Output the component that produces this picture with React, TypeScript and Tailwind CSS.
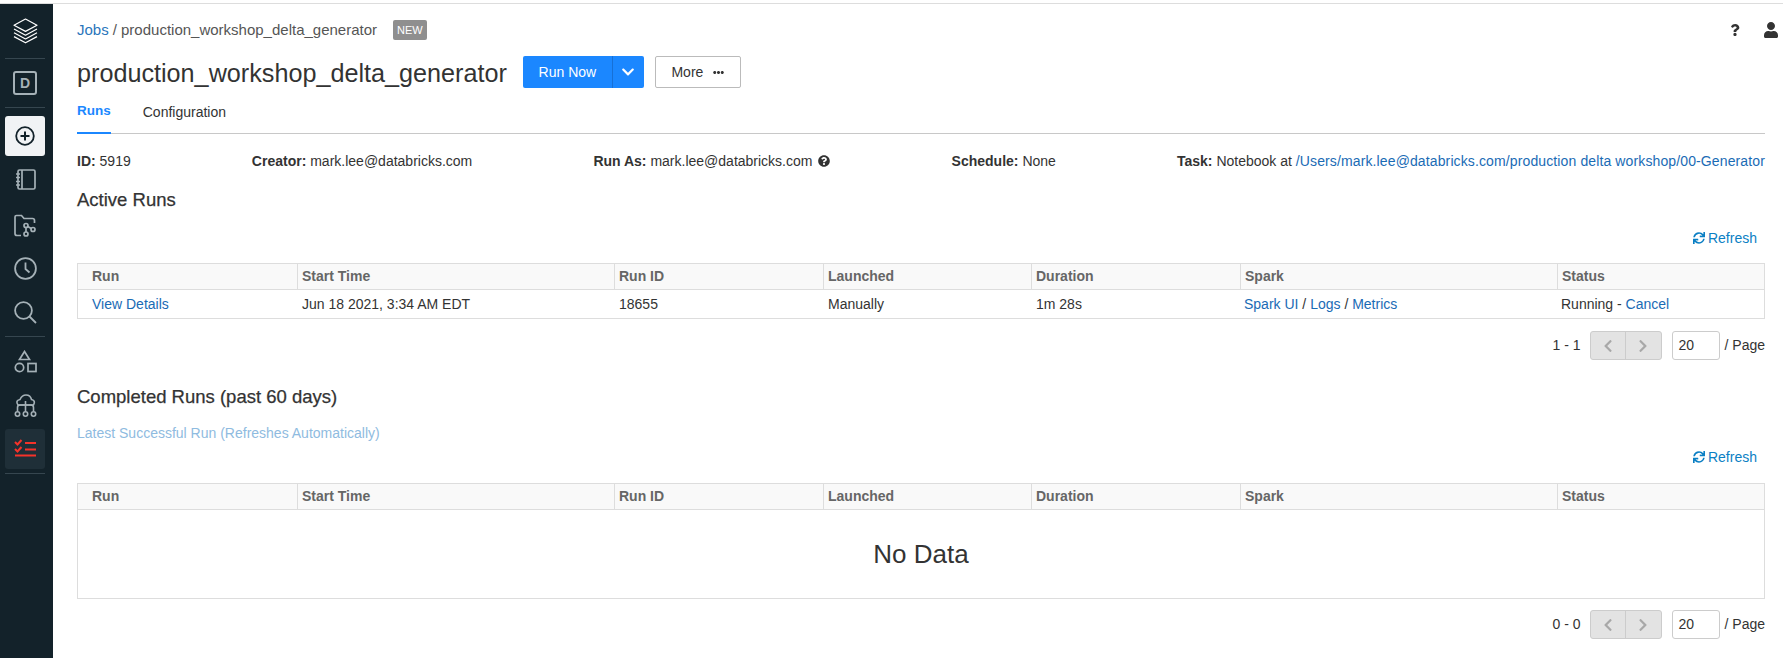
import { FaChevronDown, FaChevronLeft, FaChevronRight, FaEllipsisH, FaQuestion, FaQuestionCircle, FaSync, FaUser } from "react-icons/fa";

const columns = ["Run", "Start Time", "Run ID", "Launched", "Duration", "Spark", "Status"];
const gridCols = "grid grid-cols-[219px_317px_209px_208px_209px_317px_1fr]";
const link = "text-[#1a6bb5]";

const Divider = () => <div className="mx-[5px] h-px bg-[#36464f]" />;

const Sidebar = () => (
  <aside className="w-[53px] shrink-0 bg-[#13222a] pr-[3px] text-[#a5b1b7]">
    <div className="flex h-[54px] items-center justify-center">
      <svg width="25" height="26" viewBox="0 0 25 26" fill="none" stroke="#ffffff" strokeWidth="1.2" strokeLinejoin="round">
        <path d="M12.5 1 L24 7.2 L12.5 13.4 L1 7.2 Z" />
        <path d="M1 11 L12.5 17.2 L24 11" />
        <path d="M1 14.8 L12.5 21 L24 14.8" />
        <path d="M1 18.6 L12.5 24.8 L24 18.6" />
      </svg>
    </div>
    <Divider />
    <div className="flex h-[48px] items-center justify-center">
      <div className="flex h-[24px] w-[24px] items-center justify-center rounded-[3px] border-2 border-[#a5b1b7] font-['Liberation_Sans',sans-serif] text-[14px] font-bold">
        D
      </div>
    </div>
    <Divider />
    <div className="mx-[5px] mt-[8px] flex h-[40px] items-center justify-center rounded-[3px] bg-[#f1f3f5]">
      <svg width="20" height="20" viewBox="0 0 20 20" fill="none" stroke="#13222a" strokeWidth="1.8">
        <circle cx="10" cy="10" r="8.8" />
        <path d="M10 5.5 V14.5 M5.5 10 H14.5" strokeWidth="2" />
      </svg>
    </div>
    <div className="flex h-[47px] items-center justify-center">
      <svg width="21" height="21" viewBox="0 0 21 21" fill="none" stroke="currentColor" strokeWidth="1.7">
        <rect x="3" y="1" width="17" height="19" rx="1.5" />
        <path d="M7 1 V20 M1 5 H5 M1 8.5 H5 M1 12.5 H5 M1 16 H5" />
      </svg>
    </div>
    <div className="flex h-[44px] items-center justify-center">
      <svg width="22" height="23" viewBox="0 0 22 23" fill="none" stroke="currentColor" strokeWidth="1.7">
        <path d="M7 21.5 H3 Q1 21.5 1 19.5 V3 Q1 1.5 2.5 1.5 H7.5 L10 4.5 H18.5 Q20.5 4.5 20.5 6.5 V9" />
        <circle cx="12" cy="11.5" r="2" />
        <circle cx="12" cy="20" r="2" />
        <circle cx="19" cy="15.5" r="2" />
        <path d="M12 13.5 V18 M13.8 12.6 L17.2 14.6" />
      </svg>
    </div>
    <div className="flex h-[43px] items-center justify-center">
      <svg width="23" height="23" viewBox="0 0 23 23" fill="none" stroke="currentColor" strokeWidth="1.8">
        <circle cx="11.5" cy="11.5" r="10.4" />
        <path d="M11.5 5.5 V12 L15.5 15.5" />
      </svg>
    </div>
    <div className="flex h-[46px] items-center justify-center pb-[2px]">
      <svg width="23" height="23" viewBox="0 0 23 23" fill="none" stroke="currentColor" strokeWidth="1.8">
        <circle cx="9.5" cy="9.5" r="8.4" />
        <path d="M15.5 15.5 L22 22" />
      </svg>
    </div>
    <Divider />
    <div className="mt-[2px] flex h-[44px] items-center justify-center">
      <svg width="23" height="23" viewBox="0 0 23 23" fill="none" stroke="currentColor" strokeWidth="1.7">
        <path d="M10.5 1.5 L15.5 9.5 H5.5 Z" />
        <circle cx="5.5" cy="17.5" r="4.2" />
        <rect x="14" y="13.5" width="8" height="8" />
      </svg>
    </div>
    <div className="flex h-[45px] items-center justify-center">
      <svg width="23" height="23" viewBox="0 0 23 23" fill="none" stroke="currentColor" strokeWidth="1.6">
        <path d="M4 11 Q1 6.5 6 5.5 Q8 1 12 1 Q16.5 1 17.5 5.5 Q22 6.5 19.5 11 Z" />
        <path d="M3.5 17.5 V13.5 Q3.5 11 6 11 H17 Q19.5 11 19.5 13.5 V17.5 M11.5 7 V17.5" />
        <circle cx="3.5" cy="20" r="2.2" />
        <circle cx="11.5" cy="20" r="2.2" />
        <circle cx="19.5" cy="20" r="2.2" />
      </svg>
    </div>
    <div className="mx-[5px] mt-[1px] flex h-[40px] items-center justify-center rounded-[3px] bg-[#1f2f38] pb-[2px]">
      <svg width="22" height="18" viewBox="0 0 22 18" fill="none" stroke="#f5332a" strokeWidth="2">
        <path d="M1 3 L3.5 5.5 L7.5 1 M1 10 L3.5 12.5 L7.5 8" />
        <path d="M11 4 H22 M11 10.5 H22 M1 16.5 H22" />
      </svg>
    </div>
    <div className="mx-[5px] mt-[4px] h-px bg-[#36464f]" />
  </aside>
);

const TableHead = () => (
  <div className={`${gridCols} h-[26px] border-b border-[#ddd] bg-[#f9f9f9] text-[14px] font-bold text-[#666]`}>
    {columns.map((c, i) => (
      <div key={c} className={`flex items-center ${i === 0 ? "pl-[14px]" : "border-l border-[#ddd] pl-[4px]"}`}>
        {c}
      </div>
    ))}
  </div>
);

const RefreshRow = ({ className }: { className: string }) => (
  <div className={`flex justify-end pr-[8px] text-[14px] text-[#0b7fc4] ${className}`}>
    <span className="flex items-center gap-[3px]">
      <FaSync size={12} />
      Refresh
    </span>
  </div>
);

const Pagination = ({ range, className }: { range: string; className: string }) => (
  <div className={`flex items-center justify-end text-[14px] text-[#333] ${className}`}>
    <span>{range}</span>
    <div className="ml-[9px] flex h-[29px] w-[72px] rounded-[3px] border border-[#ccc] bg-[#e3e3e3] text-[#a8a8a8]">
      <div className="flex flex-1 items-center justify-center border-r border-[#ccc]">
        <FaChevronLeft size={14} />
      </div>
      <div className="flex flex-1 items-center justify-center">
        <FaChevronRight size={14} />
      </div>
    </div>
    <div className="ml-[10px] flex h-[29px] w-[48px] items-center rounded-[3px] border border-[#ccc] pl-[6px]">20</div>
    <span className="ml-[5px]">/ Page</span>
  </div>
);

export default function App() {
  return (
    <div className="flex h-[658px] flex-col overflow-hidden bg-white font-['Liberation_Sans',Arial,sans-serif] text-[#333]">
      <div className="h-[4px] shrink-0 border-b border-[#ddd]" />
      <div className="flex min-h-0 flex-1">
        <Sidebar />
        <main className="min-w-0 flex-1 pl-[24px] pr-[18px]">
          <div className="flex h-[44px] items-center pt-[8px] text-[15px] text-[#555]">
            <span className="text-[#2a75bb]">Jobs</span>
            <span className="ml-[4px]">/ production_workshop_delta_generator</span>
            <span className="ml-[16px] rounded-[2px] bg-[#8f8f8f] px-[4px] py-[3px] text-[11px] leading-[14px] text-white">NEW</span>
            <div className="ml-auto -mr-[14px] flex items-center gap-[22px] text-[#333]">
              <FaQuestion size={12} />
              <FaUser size={16} />
            </div>
          </div>
          <div className="mt-[8px] flex items-center">
            <h1 className="pt-[2px] text-[25.2px] leading-[30px] font-normal text-[#333]">production_workshop_delta_generator</h1>
            <div className="ml-[16px] flex h-[32px] w-[121px] rounded-[2px] bg-[#1b87ff] text-[14px] text-white">
              <div className="flex flex-1 items-center justify-center border-r border-[#1770d6]">Run Now</div>
              <div className="flex w-[31px] items-center justify-center">
                <FaChevronDown size={14} />
              </div>
            </div>
            <div className="ml-[11px] flex h-[32px] w-[86px] items-center justify-center gap-[10px] rounded-[2px] border border-[#bbb] text-[14px]">
              More
              <FaEllipsisH size={11} />
            </div>
          </div>
          <div className="mt-[7px] flex h-[39px] border-b border-[#c8c8c8] text-[14px]">
            <div className="-mb-px flex items-center border-b-2 border-[#1b87ff] pb-[4px] text-[13.5px] font-bold text-[#1b87ff]">Runs</div>
            <div className="ml-[32px] flex items-center pb-[4px]">Configuration</div>
          </div>
          <div className="mt-[17px] flex justify-between text-[14px] leading-[20px]">
            <div><b>ID:</b> 5919</div>
            <div><b>Creator:</b> mark.lee@databricks.com</div>
            <div className="flex items-center gap-[6px]">
              <span><b>Run As:</b> mark.lee@databricks.com</span>
              <FaQuestionCircle size={12} />
            </div>
            <div><b>Schedule:</b> None</div>
            <div>
              <b>Task:</b> Notebook at <span className={`${link} tracking-[0.12px]`}>/Users/mark.lee@databricks.com/production delta workshop/00-Generator</span>
            </div>
          </div>
          <h2 className="mt-[18px] text-[18.5px] leading-[22px] font-normal [-webkit-text-stroke:0.25px]">Active Runs</h2>
          <RefreshRow className="mt-[17px] h-[20px]" />
          <div className="mt-[15px] border border-[#ddd] text-[14px]">
            <TableHead />
            <div className={`${gridCols} h-[28px] items-center`}>
              <div className={`pl-[14px] ${link}`}>View Details</div>
              <div className="pl-[5px]">Jun 18 2021, 3:34 AM EDT</div>
              <div className="pl-[5px]">18655</div>
              <div className="pl-[5px]">Manually</div>
              <div className="pl-[5px]">1m 28s</div>
              <div className="pl-[4px]">
                <span className={link}>Spark UI</span> / <span className={link}>Logs</span> / <span className={link}>Metrics</span>
              </div>
              <div className="pl-[4px]">
                Running - <span className={link}>Cancel</span>
              </div>
            </div>
          </div>
          <Pagination range="1 - 1" className="mt-[12px]" />
          <h2 className="mt-[26px] text-[18.5px] leading-[22px] font-normal [-webkit-text-stroke:0.25px]">Completed Runs (past 60 days)</h2>
          <div className="mt-[16px] text-[14px] leading-[18px] text-[#8fbbe0]">Latest Successful Run (Refreshes Automatically)</div>
          <RefreshRow className="mt-[5px] h-[20px]" />
          <div className="mt-[16px] border border-[#ddd]">
            <TableHead />
            <div className="flex h-[88px] items-center justify-center text-[26px] text-[#333]">No Data</div>
          </div>
          <Pagination range="0 - 0" className="mt-[11px]" />
        </main>
      </div>
    </div>
  );
}
